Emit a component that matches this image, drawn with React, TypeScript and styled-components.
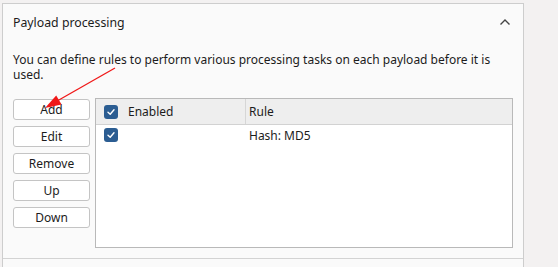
import styled, { createGlobalStyle } from "styled-components"

const GlobalStyle = createGlobalStyle`
  html, body {
    margin: 0;
    padding: 0;
    background: #f3f1f1;
    font-family: "Noto Sans", "Open Sans", sans-serif;
    font-size: 12px;
    color: #1c1c1c;
  }
`

const Style = {
  Page: styled.div`
    width: 558px;
    height: 267px;
    overflow: hidden;
    padding: 3px 0 0 2px;
    box-sizing: border-box;
  `,
  Panel: styled.div`
    position: relative;
    width: 522px;
    height: 264px;
    box-sizing: border-box;
    background: #fafafa;
    border: 1px solid #cdcdcd;
    border-bottom: none;
    display: flex;
    flex-direction: column;
  `,
  Header: styled.div`
    height: 36px;
    flex: none;
    padding: 0 12px 0 10px;
    display: flex;
    align-items: center;
    justify-content: space-between;
  `,
  Title: styled.span`
    font-size: 12.3px;
  `,
  Body: styled.div`
    height: 219px;
    flex: none;
    padding: 12px 10px 0 10px;
    box-sizing: border-box;
    border-bottom: 1px solid #d3d3d3;
  `,
  Description: styled.p`
    margin: 0;
    line-height: 15px;
    width: 486px;
  `,
  Content: styled.div`
    display: flex;
    gap: 5px;
    margin-top: 16px;
  `,
  Buttons: styled.div`
    display: flex;
    flex-direction: column;
    gap: 6px;
    padding-top: 1px;
  `,
  Button: styled.button`
    width: 77px;
    height: 21px;
    padding: 0;
    background: #ffffff;
    border: 1px solid #c4c4c4;
    border-radius: 3px;
    font-family: inherit;
    font-size: 12px;
    color: #1c1c1c;
    line-height: 19px;
  `,
  Table: styled.div`
    width: 418px;
    height: 150px;
    box-sizing: border-box;
    border: 1px solid #b9b9b9;
    background: #ffffff;
  `,
  HeadRow: styled.div`
    display: grid;
    grid-template-columns: 149px 1fr;
    height: 25px;
    background: #eeeeee;
    border-bottom: 1px solid #d2d2d2;
  `,
  Row: styled.div`
    display: grid;
    grid-template-columns: 149px 1fr;
    height: 20px;
  `,
  CheckCell: styled.div`
    display: flex;
    align-items: center;
    gap: 10px;
    padding-left: 8px;
  `,
  TextCell: styled.div<{ $divider?: boolean }>`
    display: flex;
    align-items: center;
    padding-left: 3px;
    border-left: 1px solid ${(p) => (p.$divider ? "#d6d6d6" : "transparent")};
  `,
  Check: styled.span`
    width: 14px;
    height: 14px;
    border-radius: 3px;
    background: #2b5d92;
    display: inline-flex;
    align-items: center;
    justify-content: center;
  `,
  Arrow: styled.svg`
    position: absolute;
    left: -3px;
    top: -4px;
    pointer-events: none;
  `,
}

function CheckBox() {
  return (
    <Style.Check>
      <svg width="10" height="10" viewBox="0 0 10 10">
        <path d="M2 5.2 L4.2 7.2 L8 2.8" fill="none" stroke="#ffffff" strokeWidth="1.4" strokeLinecap="round" strokeLinejoin="round" />
      </svg>
    </Style.Check>
  )
}

export default function App() {
  return (
    <>
      <GlobalStyle />
      <Style.Page>
        <Style.Panel>
          <Style.Header>
            <Style.Title>Payload processing</Style.Title>
            <svg width="12" height="8" viewBox="0 0 12 8">
              <path d="M1.5 6.5 L6 2 L10.5 6.5" fill="none" stroke="#444" strokeWidth="1.4" />
            </svg>
          </Style.Header>
          <Style.Body>
            <Style.Description>
              You can define rules to perform various processing tasks on each payload before it is used.
            </Style.Description>
            <Style.Content>
              <Style.Buttons>
                <Style.Button>Add</Style.Button>
                <Style.Button>Edit</Style.Button>
                <Style.Button>Remove</Style.Button>
                <Style.Button>Up</Style.Button>
                <Style.Button>Down</Style.Button>
              </Style.Buttons>
              <Style.Table>
                <Style.HeadRow>
                  <Style.CheckCell>
                    <CheckBox />
                    Enabled
                  </Style.CheckCell>
                  <Style.TextCell $divider>Rule</Style.TextCell>
                </Style.HeadRow>
                <Style.Row>
                  <Style.CheckCell>
                    <CheckBox />
                  </Style.CheckCell>
                  <Style.TextCell>Hash: MD5</Style.TextCell>
                </Style.Row>
              </Style.Table>
            </Style.Content>
          </Style.Body>
          <Style.Arrow width="140" height="120" viewBox="0 0 140 120">
            <line x1="115" y1="68" x2="58" y2="100.5" stroke="#f01818" strokeWidth="1.3" />
            <polygon points="45,108 56.2,95.6 61.6,104.6" fill="#f01818" />
          </Style.Arrow>
        </Style.Panel>
      </Style.Page>
    </>
  )
}
